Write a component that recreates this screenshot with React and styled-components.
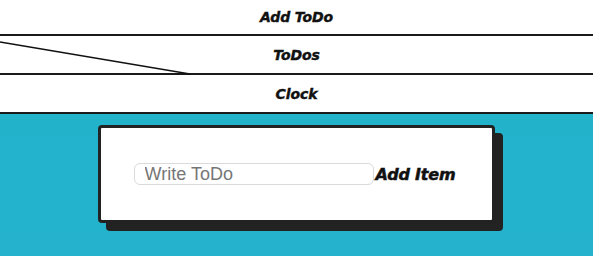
import React from "react";
import styled, { createGlobalStyle } from "styled-components";

const GlobalStyle = createGlobalStyle`
  html, body {
    margin: 0;
    padding: 0;
    height: 100%;
  }
  body {
    font-family: "DejaVu Sans", "Liberation Sans", sans-serif;
    background: #ffffff;
  }
  #root {
    min-height: 100%;
    display: flex;
    flex-direction: column;
  }
`;

const links = [
  { label: "Add ToDo", height: 34 },
  { label: "ToDos", height: 37 },
  { label: "Clock", height: 37 },
];

function App() {
  return (
    <>
      <GlobalStyle />
      <Page>
        <Nav>
          {links.map((l) => (
            <NavLink key={l.label} $height={l.height}>
              {l.label}
            </NavLink>
          ))}
          <Slash width="192" height="80" viewBox="0 0 192 80">
            <line x1="0" y1="42" x2="190" y2="74" stroke="#111" strokeWidth="1.6" />
          </Slash>
        </Nav>
        <Main>
          <Card>
            <Form>
              <Input placeholder="Write ToDo" />
              <AddButton type="button">Add Item</AddButton>
            </Form>
          </Card>
        </Main>
      </Page>
    </>
  );
}

export default App;

const Page = styled.div`
  flex: 1;
  display: flex;
  flex-direction: column;
`;

const Nav = styled.nav`
  position: relative;
  display: flex;
  flex-direction: column;
  background: #fff;
`;

const NavLink = styled.a`
  display: flex;
  align-items: center;
  justify-content: center;
  height: ${(p) => p.$height}px;
  border-bottom: 2px solid #1a1a1a;
  font-family: "DejaVu Sans", sans-serif;
  font-size: 14px;
  font-weight: 700;
  font-style: italic;
  color: #111;
  letter-spacing: -0.1px;
  -webkit-text-stroke: 0.4px #111;
  cursor: pointer;
`;

const Slash = styled.svg`
  position: absolute;
  top: 0;
  left: 0;
`;

const Main = styled.main`
  flex: 1;
  background: linear-gradient(180deg, #22b3cb 0%, #24b2cd 100%);
  padding-top: 11px;
  display: flex;
  justify-content: center;
  align-items: flex-start;
`;

const Card = styled.div`
  width: 391px;
  height: 92px;
  background: #fff;
  border: 3px solid #222;
  border-radius: 4px;
  box-shadow: 8px 8px 0 #222;
  display: flex;
  align-items: center;
  justify-content: center;
`;

const Form = styled.form`
  display: flex;
  align-items: center;
  margin-left: -4px;
`;

const Input = styled.input`
  width: 240px;
  height: 22px;
  box-sizing: border-box;
  border: 1px solid #dadada;
  border-radius: 6px;
  padding: 0 10px;
  font-family: "Liberation Sans", Arial, sans-serif;
  font-size: 18px;
  color: #333;
  outline: none;

  &::placeholder {
    color: #767676;
  }
`;

const AddButton = styled.button`
  background: none;
  border: none;
  padding: 0 0 0 2px;
  font-family: "DejaVu Sans", sans-serif;
  font-size: 16px;
  font-weight: 700;
  font-style: italic;
  letter-spacing: -0.2px;
  -webkit-text-stroke: 0.5px #111;
  color: #111;
  cursor: pointer;
`;
